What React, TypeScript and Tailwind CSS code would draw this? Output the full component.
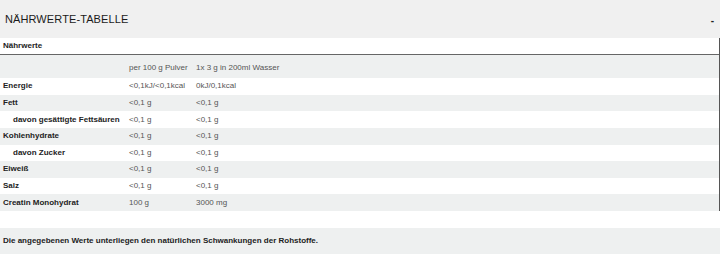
const rows: { label: string; a: string; b: string; sub?: boolean }[] = [
  { label: "Energie", a: "<0,1kJ/<0,1kcal", b: "0kJ/0,1kcal" },
  { label: "Fett", a: "<0,1 g", b: "<0,1 g" },
  { label: "davon gesättigte Fettsäuren", a: "<0,1 g", b: "<0,1 g", sub: true },
  { label: "Kohlenhydrate", a: "<0,1 g", b: "<0,1 g" },
  { label: "davon Zucker", a: "<0,1 g", b: "<0,1 g", sub: true },
  { label: "Eiweiß", a: "<0,1 g", b: "<0,1 g" },
  { label: "Salz", a: "<0,1 g", b: "<0,1 g" },
  { label: "Creatin Monohydrat", a: "100 g", b: "3000 mg" },
];

export default function App() {
  return (
    <div className="w-[720px] h-[254px] bg-white overflow-hidden font-['Liberation_Sans',Arial,sans-serif]">
      {/* Header */}
      <div className="h-[38px] bg-[#f0f0f0] flex items-center justify-between pl-[5px] pr-[6px]">
        <h2 className="text-[11px] text-[#1a1a1a] tracking-[0.1px]">NÄHRWERTE-TABELLE</h2>
        <span className="text-[10px] font-bold text-[#222] mt-[3px]">-</span>
      </div>

      {/* Table */}
      <div className="border-r border-[#555]">
        <div className="h-[16px] flex items-center px-[3px] border-b border-[#666] text-[8px] font-bold text-[#222] box-content">
          Nährwerte
        </div>
        <div className="h-[23px] pt-[2px] bg-[#eef0f0] flex items-center text-[8px] text-[#555]">
          <div className="w-[129px]" />
          <div className="w-[67px]">per 100 g Pulver</div>
          <div>1x 3 g in 200ml Wasser</div>
        </div>
        {rows.map((r, i) => (
          <div
            key={r.label}
            className={`h-[16.625px] flex items-center text-[8px] ${i % 2 === 1 ? "bg-[#eef0f0]" : "bg-white"}`}
          >
            <div className={`w-[129px] font-bold text-[#222] ${r.sub ? "pl-[13px]" : "pl-[3px]"}`}>{r.label}</div>
            <div className="w-[67px] text-[#555]">{r.a}</div>
            <div className="text-[#555]">{r.b}</div>
          </div>
        ))}
      </div>

      {/* Note */}
      <div className="mt-[17px] h-[26px] bg-[#eef0f0] flex items-center px-[3px] text-[8px] font-bold text-[#222]">
        Die angegebenen Werte unterliegen den natürlichen Schwankungen der Rohstoffe.
      </div>
    </div>
  );
}
